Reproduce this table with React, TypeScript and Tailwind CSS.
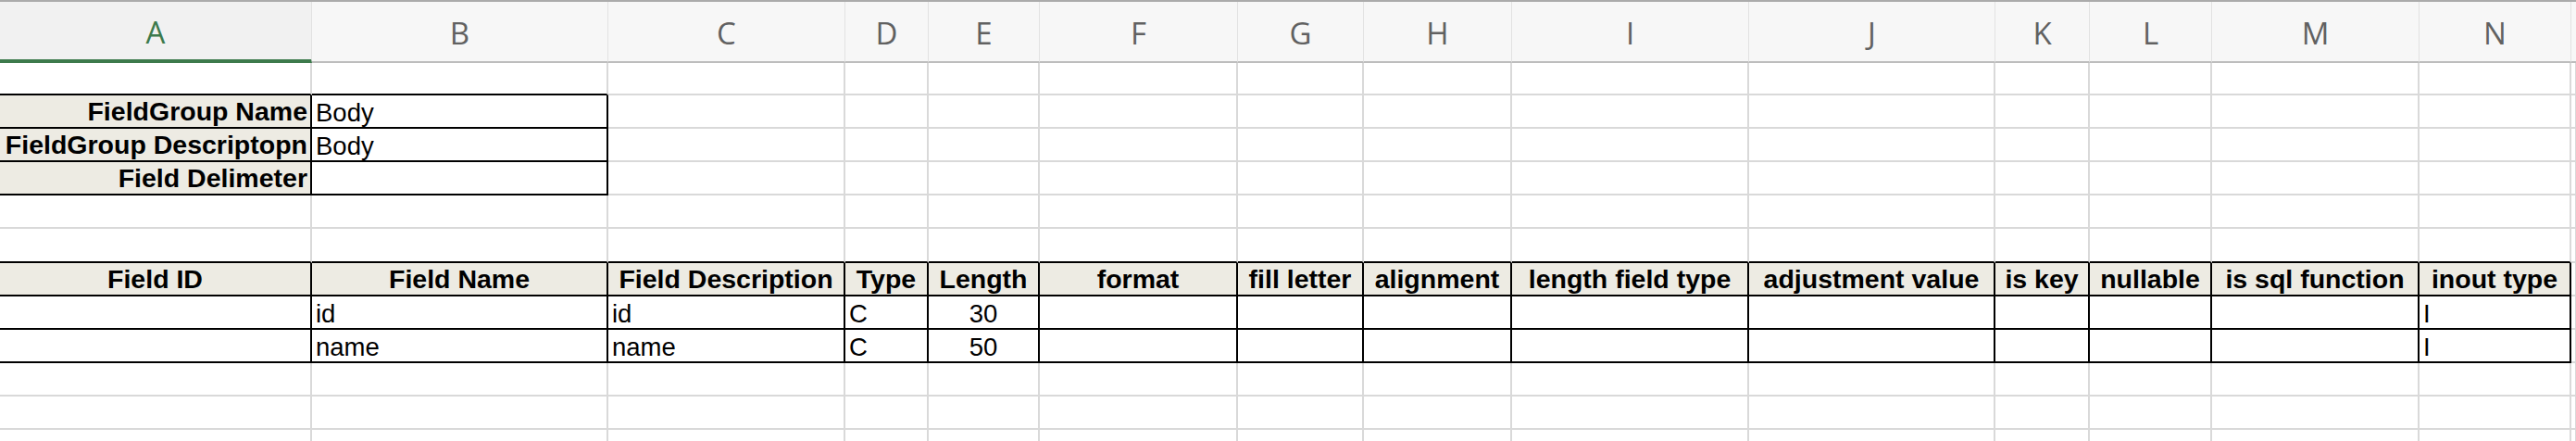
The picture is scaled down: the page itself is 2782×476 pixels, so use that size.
import React from 'react';

type Cell = { t?: string; b?: boolean; al?: 'l' | 'c' | 'r'; bg?: boolean };

const COLS = ['A', 'B', 'C', 'D', 'E', 'F', 'G', 'H', 'I', 'J', 'K', 'L', 'M', 'N'];

const GRID =
  'grid grid-cols-[337px_320px_256px_90px_120px_214px_136px_160px_256px_266px_102px_132px_224px_164px_1fr]';

// row heights, first row sits right under the column header
const ROW_H = [
  'h-[35px]', 'h-[36px]', 'h-[36px]', 'h-[36px]', 'h-[36px]', 'h-[37px]',
  'h-[36px]', 'h-[36px]', 'h-[36px]', 'h-[36px]', 'h-[36px]', 'h-[36px]',
];

const head = (t: string): Cell => ({ t, b: true, al: 'c', bg: true });

const FIELD_HEADERS = [
  'Field ID', 'Field Name', 'Field Description', 'Type', 'Length', 'format', 'fill letter',
  'alignment', 'length field type', 'adjustment value', 'is key', 'nullable', 'is sql function', 'inout type',
];

const rows: Record<number, Record<number, Cell>> = {
  1: { 0: { t: 'FieldGroup Name', b: true, al: 'r', bg: true }, 1: { t: 'Body' } },
  2: { 0: { t: 'FieldGroup Descriptopn', b: true, al: 'r', bg: true }, 1: { t: 'Body' } },
  3: { 0: { t: 'Field Delimeter', b: true, al: 'r', bg: true }, 1: {} },
  6: Object.fromEntries(FIELD_HEADERS.map((h, i) => [i, head(h)])),
  7: { 1: { t: 'id' }, 2: { t: 'id' }, 3: { t: 'C' }, 4: { t: '30', al: 'c' }, 13: { t: 'I' } },
  8: { 1: { t: 'name' }, 2: { t: 'name' }, 3: { t: 'C' }, 4: { t: '50', al: 'c' }, 13: { t: 'I' } },
};

const inBlock = (r: number, c: number) =>
  (r >= 1 && r <= 3 && c >= 0 && c <= 1) || (r >= 6 && r <= 8 && c >= 0 && c <= 13);

const SheetCell: React.FC<{ r: number; c: number }> = ({ r, c }) => {
  const cell = rows[r]?.[c] ?? {};
  const blackRight = c < 14 && (inBlock(r, c) || inBlock(r, c + 1));
  const blackBottom = c < 14 && (inBlock(r, c) || inBlock(r + 1, c));
  const align =
    cell.al === 'c' ? 'justify-center' : cell.al === 'r' ? 'justify-end pr-[3px]' : 'justify-start pl-[4px]';

  return (
    <div
      className={`flex items-end overflow-visible whitespace-nowrap border-r-2 border-b-2 ${
        blackRight ? 'border-r-[#000]' : 'border-r-[#d9d9d9]'
      } ${blackBottom ? 'border-b-[#000]' : 'border-b-[#d9d9d9]'} ${cell.bg ? 'bg-[#edebe3]' : 'bg-white'} ${align} ${
        cell.b ? 'text-[28.5px] font-bold pb-[3px]' : 'text-[27.5px] pb-[2px]'
      } leading-none text-black`}
    >
      {cell.t}
    </div>
  );
};

export default function App() {
  return (
    <div className="h-[476px] w-[2782px] overflow-hidden bg-white font-['Liberation_Sans',Arial,sans-serif]">
      {/* column letters */}
      <div className={`${GRID} border-t-2 border-[#ababab] bg-[#f7f7f7]`}>
        {COLS.map((l, i) => (
          <div
            key={l}
            className={`flex h-[66px] items-center justify-center border-r border-r-[#e2e2e2] font-['Open_Sans',sans-serif] text-[33px] ${
              i === 0
                ? 'border-b-4 border-b-[#3d7a4c] bg-[#f1f1f1] text-[#3d7a4c]'
                : 'border-b-2 border-b-[#bdbdbd] text-[#616161]'
            }`}
          >
            <span className="mt-[4px]">{l}</span>
          </div>
        ))}
        <div className="h-[66px] border-b-2 border-b-[#bdbdbd]" />
      </div>

      {/* sheet rows */}
      {ROW_H.map((h, r) => (
        <div key={r} className={`${GRID} ${h}`}>
          {Array.from({ length: 15 }, (_, c) => (
            <SheetCell key={c} r={r} c={c} />
          ))}
        </div>
      ))}
    </div>
  );
}
